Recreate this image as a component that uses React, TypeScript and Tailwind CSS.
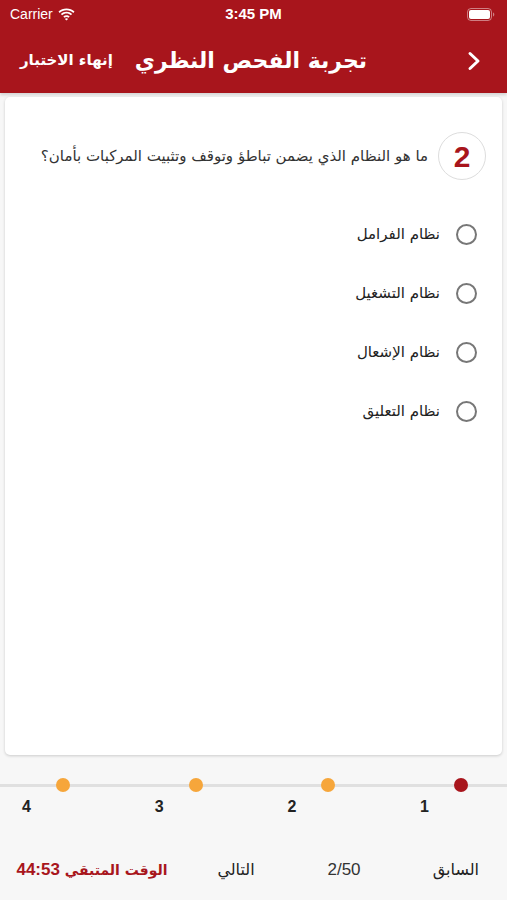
import React from "react";

const RED = "#a8151c";

function Wifi() {
  return (
    <svg width="17" height="13" viewBox="0 0 17 13">
      <path d="M8.5 2.2c2.6 0 5 1 6.8 2.7l1.2-1.3C14.4 1.6 11.6.4 8.5.4S2.6 1.6.5 3.6l1.2 1.3C3.5 3.2 5.9 2.2 8.5 2.2z" fill="white" />
      <path d="M8.5 5.6c1.7 0 3.2.6 4.4 1.7l1.2-1.3C12.6 4.6 10.6 3.8 8.5 3.8S4.4 4.6 2.9 6l1.2 1.3c1.2-1.1 2.7-1.7 4.4-1.7z" fill="white" />
      <path d="M8.5 9c.8 0 1.5.3 2 .8l1.2-1.3c-.9-.8-2-1.3-3.2-1.3s-2.3.5-3.2 1.3l1.2 1.3c.5-.5 1.2-.8 2-.8z" fill="white" />
      <path d="M8.5 12.6l1.6-1.7c-.4-.4-1-.6-1.6-.6s-1.2.2-1.6.6z" fill="white" />
    </svg>
  );
}

function Battery() {
  return (
    <svg width="28" height="13" viewBox="0 0 28 13">
      <rect x="0.5" y="0.5" width="24" height="12" rx="3.5" fill="none" stroke="rgba(255,255,255,0.45)" />
      <rect x="2" y="2" width="21" height="9" rx="2" fill="white" />
      <path d="M26 4.5v4c.8-.3 1.3-1.1 1.3-2s-.5-1.7-1.3-2z" fill="rgba(255,255,255,0.45)" />
    </svg>
  );
}

const ar = { fontFamily: '"DejaVu Sans", "Noto Sans", sans-serif' };
const lat = { fontFamily: '"Liberation Sans", Arial, sans-serif' };

export default function App() {
  const options = ["نظام الفرامل", "نظام التشغيل", "نظام الإشعال", "نظام التعليق"];
  const steps = [
    { n: "1", c: RED },
    { n: "2", c: "#f6a63b" },
    { n: "3", c: "#f6a63b" },
    { n: "4", c: "#f6a63b" },
  ];
  return (
    <div className="w-[507px] h-[900px] bg-[#f7f7f7] flex flex-col overflow-hidden" style={ar}>
      <div className="bg-[#a8151c] shadow-[0_2px_3px_rgba(0,0,0,0.15)]">
        <div className="h-[28px] flex items-center justify-between px-[10px] text-white relative">
          <div className="flex items-center gap-[5px] text-[14px]" style={lat}>
            <span>Carrier</span>
            <Wifi />
          </div>
          <div className="absolute left-0 right-0 text-center text-[15px] font-semibold" style={lat}>3:45 PM</div>
          <div className="pr-[2px]"><Battery /></div>
        </div>
        <div dir="rtl" className="h-[65px] flex items-center pr-[25px] pl-[20px] text-white">
          <div className="flex-1 flex">
            <svg width="16" height="22" viewBox="0 0 16 22">
              <path d="M4 3.5l8 7.5-8 7.5" fill="none" stroke="white" strokeWidth="3" strokeLinecap="round" strokeLinejoin="round" />
            </svg>
          </div>
          <div className="text-[22px] font-bold">تجربة الفحص النظري</div>
          <div className="flex-1 flex justify-end text-[15px] font-bold">إنهاء الاختبار</div>
        </div>
      </div>

      <div className="mx-[5px] mt-[4px] h-[658px] bg-white rounded-[5px] shadow-[0_1px_3px_rgba(0,0,0,0.18)]" dir="rtl">
        <div className="flex items-center gap-[10px] pr-[16px] pt-[35px]">
          <div className="w-[48px] h-[48px] rounded-full border border-[#dddddd] flex items-center justify-center text-[30px] font-bold text-[#a8151c]" style={lat}>2</div>
          <div className="text-[15px] text-[#333333]">ما هو النظام الذي يضمن تباطؤ وتوقف وتثبيت المركبات بأمان؟</div>
        </div>
        <div className="flex flex-col gap-[37px] pr-[25px] pt-[43px]">
          {options.map((o) => (
            <div key={o} className="flex items-center gap-[16px] h-[22px]">
              <div className="w-[21px] h-[21px] rounded-full border-[2px] border-[#777777]" />
              <div className="text-[15px] text-[#222222]">{o}</div>
            </div>
          ))}
        </div>
      </div>

      <div className="mt-[23px] relative h-[60px]" dir="rtl">
        <div className="absolute left-0 right-0 top-[6px] h-[3px] bg-[#e0e0e0]" />
        <div className="relative flex pr-[39px]">
          {steps.map((s) => (
            <div key={s.n} className="w-[132.7px] shrink-0 flex flex-col items-start">
              <div className="w-[14px] h-[14px] rounded-full" style={{ backgroundColor: s.c }} />
              <div className="text-[16px] font-bold text-[#222222] mt-[3px] mr-[39px]" style={lat}>{s.n}</div>
            </div>
          ))}
        </div>
      </div>

      <div className="flex items-center h-[44px] mt-[10px] text-[16px] text-[#222222]">
        <div className="w-[184px] flex justify-center items-center text-[#a8151c] font-bold" dir="rtl">
          <span className="text-[14px]">الوقت المتبقي&nbsp;</span>
          <span className="text-[17px]" style={lat}>44:53</span>
        </div>
        <div className="w-[104px] text-center" dir="rtl">التالي</div>
        <div className="w-[112px] text-center text-[17px] text-[#333]" style={lat}>2/50</div>
        <div className="w-[79px] text-right" dir="rtl">السابق</div>
      </div>
    </div>
  );
}
